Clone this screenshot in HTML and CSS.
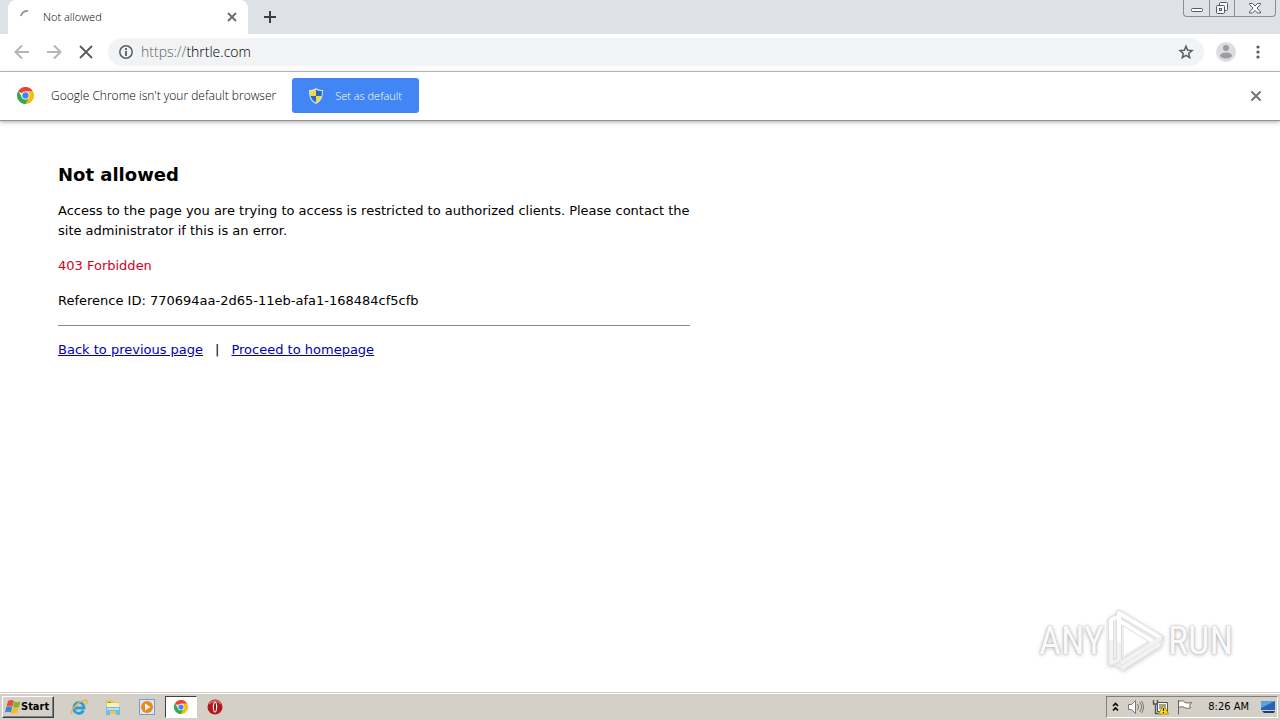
FILE: index.html
```html
<!DOCTYPE html>
<html lang="en">
<head>
<meta charset="utf-8">
<title>Not allowed</title>
<link rel="stylesheet" href="styles.css">
</head>
<body>
<svg class="defs" aria-hidden="true">
  <symbol id="chrome" viewBox="0 0 48 48">
    <path fill="#ea4335" d="M24 24 3.2 12A24 24 0 0 1 44.8 12L45 13H24z"/>
    <path fill="#fbbc05" d="M44.8 12A24 24 0 0 1 24 48L20 47 33.5 29.5 24 13H44.8z"/>
    <path fill="#34a853" d="M3.2 12A24 24 0 0 0 24 48L33.5 29.5 24 35 14.5 29.5 4 11z"/>
    <circle cx="24" cy="24" r="11.5" fill="#fff"/><circle cx="24" cy="24" r="9" fill="#4285f4"/>
  </symbol>
</svg>
<header class="browser">
  <div class="tabstrip">
    <div class="tab">
      <svg class="spinner" width="16" height="16" viewBox="0 0 16 16"><path d="M2 7A6 6 0 0 1 9 2" fill="none" stroke="#969696" stroke-width="2"/></svg>
      <span class="tab-title">Not allowed</span>
      <button class="icon-btn" aria-label="Close tab"><svg width="16" height="16" viewBox="0 0 16 16"><path d="m4 4 8 8M12 4l-8 8" stroke="#66696d" stroke-width="1.800"/></svg></button>
    </div>
    <button class="icon-btn new-tab" aria-label="New tab"><svg width="16" height="16" viewBox="0 0 16 16"><path d="M8 2v12M2 8h12" stroke="#3a3d42" stroke-width="2"/></svg></button>
    <div class="window-controls">
      <button aria-label="Minimize"><svg width="14" height="14" viewBox="0 0 14 14"><rect x="1.500" y="8.500" width="11" height="3" rx="1" fill="#fff" stroke="#565a62"/></svg></button>
      <button aria-label="Restore"><svg width="14" height="14" viewBox="0 0 14 14" fill="#f4f5f7" stroke="#565a62"><rect x="4.500" y="2.500" width="8" height="8" rx="1"/><rect x="1.500" y="5.500" width="8" height="8" rx="1"/><rect x="4.500" y="8.500" width="2" height="2"/></svg></button>
      <button class="wide" aria-label="Close"><svg width="14" height="14" viewBox="0 0 14 14"><path d="M1.500 3.500h3L7 6l2.500-2.500h3v1L9 8l3.500 4v1h-3L7 10.500 4.500 13h-3v-1L5 8 1.500 4.500z" fill="#fff" stroke="#565a62"/></svg></button>
    </div>
  </div>
  <div class="toolbar">
    <button class="icon-btn" aria-label="Back"><svg width="16" height="16" viewBox="0 0 16 16"><path d="M15 8H2M8 1.500 1.500 8 8 14.500" fill="none" stroke="#b4b5b7" stroke-width="2"/></svg></button>
    <button class="icon-btn" aria-label="Forward"><svg width="16" height="16" viewBox="0 0 16 16"><path d="M1 8h13M8 1.500 14.500 8 8 14.500" fill="none" stroke="#b4b5b7" stroke-width="2"/></svg></button>
    <button class="icon-btn" aria-label="Stop"><svg width="16" height="16" viewBox="0 0 16 16"><path d="m2 2 12 12M14 2 2 14" stroke="#56595e" stroke-width="1.800"/></svg></button>
    <div class="address">
      <svg width="16" height="16" viewBox="0 0 16 16"><circle cx="8" cy="8" r="6.200" fill="none" stroke="#5a5d61" stroke-width="1.500"/><path d="M8 4v2M8 7v5" stroke="#5a5d61" stroke-width="1.800"/></svg>
      <span class="url"><span class="scheme">https://</span>thrtle.com</span>
      <button class="icon-btn" aria-label="Bookmark"><svg width="16" height="16" viewBox="0 0 16 16"><path d="m8 2.200 1.700 4 4.300.4-3.300 2.800 1 4.200L8 11.400l-3.700 2.200 1-4.200L2 6.600l4.300-.4z" fill="none" stroke="#5a5d61" stroke-width="1.500"/></svg></button>
    </div>
    <button class="icon-btn avatar" aria-label="Profile"><svg width="20" height="20" viewBox="0 0 20 20"><circle cx="10" cy="10" r="10" fill="#dcdde0"/><circle cx="10" cy="6" r="3" fill="#9b9da1"/><ellipse cx="10" cy="13.500" rx="6" ry="3" fill="#9b9da1"/></svg></button>
    <button class="icon-btn" aria-label="Menu"><svg width="16" height="16" viewBox="0 0 16 16" fill="#56595e"><circle cx="8" cy="3" r="1.600"/><circle cx="8" cy="8" r="1.600"/><circle cx="8" cy="13" r="1.600"/></svg></button>
  </div>
  <div class="infobar">
    <svg width="17" height="17"><use href="#chrome"/></svg>
    <span class="info-text">Google Chrome isn't your default browser</span>
    <button class="set-default">
      <svg width="14" height="16" viewBox="0 0 14 16"><path d="M7 0c2 1.500 4 2 7 2 0 6-1 11-7 14C1 13 0 8 0 2c3 0 5-.5 7-2z" fill="#d5e4ee"/><path d="M7 1.500V8h5.500L13 3c-2.500 0-4.500-.5-6-1.500zM7 8H1.500c.8 3 2.500 5 5.500 6.500z" fill="#2768c4"/><path d="M7 1.500V8H1.500L1 3c2.500 0 4.500-.5 6-1.500zM7 8h5.500c-.8 3-2.500 5-5.500 6.500z" fill="#f4d73c"/></svg>
      Set as default
    </button>
    <button class="icon-btn dismiss" aria-label="Dismiss"><svg width="16" height="16" viewBox="0 0 16 16"><path d="m3.500 3.500 9 9M12.500 3.500l-9 9" stroke="#707276" stroke-width="2"/></svg></button>
  </div>
</header>
<main class="page">
  <div class="message">
    <h1>Not allowed</h1>
    <p>Access to the page you are trying to access is restricted to authorized clients. Please contact the site administrator if this is an error.</p>
    <p class="error">403 Forbidden</p>
    <p>Reference ID: 770694aa-2d65-11eb-afa1-168484cf5cfb</p>
    <hr>
    <nav><a href="#">Back to previous page</a><span>|</span><a href="#">Proceed to homepage</a></nav>
  </div>
  <div class="watermark">
    <span>ANY</span>
    <svg width="60" height="66" viewBox="0 0 60 66" fill="none" stroke-linejoin="round">
      <path d="M6 9v47l8 4 3 3 40-28v-6L15 2z" fill="#eee"/>
      <path d="M18 18v29l25-15z" fill="#fff"/>
      <g stroke="#dedede" stroke-width="6"><path d="M13 52V5l42 25-40 25M11 9l-6 3v43l8-3M14 13l34 21M54 36 16 60"/></g>
      <g stroke="#fff" stroke-width="4"><path d="M13 34V5l42 25M11 9l-6 3v20M14 13l34 21"/></g>
      <g stroke="#f2f2f2" stroke-width="4"><path d="M13 34v18M5 32v23l8-3M55 30 15 55M54 36 16 60"/></g>
    </svg>
    <span>RUN</span>
  </div>
</main>
<footer class="taskbar">
  <button class="start"><svg width="17" height="16" viewBox="0 0 17 16"><path d="M4 2c2-1.500 4-1.500 6 0L8.500 7.500c-2-1-4-1-6 0z" fill="#e8542a"/><path d="M10.500 2.500c2 1 4 1 6 0L15 8c-2 1-4 1-6 0z" fill="#79b530"/><path d="M2.200 8c2-1 4-1 6 0L7 13.500c-2-1-4-1-6 0z" fill="#3c85d4"/><path d="M8.700 8.500c2 1 4 1 6 0L13 14c-2 1-4 1-6 0z" fill="#f5bd22"/></svg>Start</button>
  <div class="tasks">
    <button aria-label="Internet Explorer"><svg width="18" height="18" viewBox="0 0 18 18" fill="none"><path d="M4 10h10c0-7-9-7-10-1-1 7 7 8 9.500 3.500" stroke="#2d9be0" stroke-width="2.800"/><path d="M2 16C-1 13 9 3 15 2c3 0 2 3 1 4" stroke="#e8b933" stroke-width="1.500"/></svg></button>
    <button aria-label="Explorer"><svg width="18" height="18" viewBox="0 0 18 18"><path d="M2 2h6l1 2h6v12H2z" fill="#e8c65a"/><path d="M3 5h12v4H3z" fill="#faf0b6"/><path d="M4 4h3v1H4z" fill="#48a65c"/><path d="M2 9h14v8h-4v-4H6v4H2z" fill="#73bce4"/><path d="M3 10h12v2H3z" fill="#b6e0f4"/></svg></button>
    <button aria-label="Media Player"><svg width="18" height="18" viewBox="0 0 18 18"><path d="M1.500 1.500h15v15h-15z" fill="#d8eaf9" stroke="#6f9fc9"/><circle cx="9" cy="9" r="6" fill="#f08718"/><path d="m7 5.500 5.500 3.500L7 12.500z" fill="#fff"/></svg></button>
    <button class="active" aria-label="Chrome"><svg width="14" height="14"><use href="#chrome"/></svg></button>
    <button aria-label="Opera"><svg width="16" height="16" viewBox="0 0 16 16"><circle cx="8" cy="8" r="7.500" fill="#b3161d"/><path d="M2 5a7 6 0 0 1 12 0" fill="none" stroke="#dc6666" stroke-width="1.500"/><ellipse cx="8" cy="8" rx="2.200" ry="5.500" fill="#fff"/><ellipse cx="8" cy="8" rx="1" ry="4.500" fill="#9a1016"/></svg></button>
  </div>
  <div class="tray">
    <svg width="9" height="12" viewBox="0 0 9 12"><path d="m2 5 2.500-2.500L7 5M2 9.500 4.500 7 7 9.500" fill="none" stroke="#000" stroke-width="1.600"/></svg>
    <svg width="18" height="16" viewBox="0 0 18 16" fill="none" stroke="#777"><path d="M1.500 5.500h3l4-4v13l-4-4h-3z" fill="#fff"/><path d="M10.500 5q2 3 0 6M12.500 3q4 5 0 10M14.500 2q4 6 0 12"/></svg>
    <svg width="17" height="16" viewBox="0 0 17 16"><path d="M5.500 3.500h10v9h-10z" fill="#fff" stroke="#555"/><path d="M7 5h7v5H7z" fill="#9aa5ad"/><path d="M1.500 1v4h4V1M3.500 5v9.500h6" fill="none" stroke="#555" stroke-width="1.400"/><path d="m11.500 6 5 9h-10z" fill="#ffdc24" stroke="#b48e10"/><path d="M11.500 9v3m0 1v1" stroke="#222" stroke-width="1.200"/></svg>
    <svg width="17" height="16" viewBox="0 0 17 16"><path d="M2.500 1v14.500M2.500 2.500c3-1 5-1 6 .5 2 1.500 4 1 7 .5l-2 3 1 2.500c-3 .5-4 .5-6-.5-2-1-4-1-6 0" fill="#fff" stroke="#666"/></svg>
    <time>8:26 AM</time>
    <svg width="16" height="15" viewBox="0 0 16 15"><path d="M1 2h14v9H1z" fill="#2862b2"/><path d="M1 2h14L1 9z" fill="#5c9fe2"/><path d="M2 12h13l-1 2H4z" fill="#1b3f75"/></svg>
  </div>
</footer>
</body>
</html>
```

FILE: styles.css
```css
* { box-sizing: border-box; }
body {
  margin: 0;
  min-height: 100vh;
  display: flex;
  flex-direction: column;
  background: #fff;
  color: #000;
  font: 13px/20px "DejaVu Sans", Verdana, sans-serif;
}
svg { display: block; flex: none; }
.defs { position: absolute; width: 0; height: 0; }
button { border: 0; padding: 0; background: none; font: inherit; color: inherit; }
.browser { font-family: "Open Sans", sans-serif; font-weight: 300; }
.icon-btn { display: flex; flex: none; }

.tabstrip { display: flex; align-items: center; height: 34px; padding-left: 8px; background: #dee1e6; }
.tab {
  display: flex;
  align-items: center;
  align-self: stretch;
  gap: 8px;
  width: 240px;
  padding: 0 8px 0 11px;
  border-radius: 8px 8px 0 0;
  background: #fff;
}
.tab-title { flex: 1; font-size: 11px; color: #000; }
.new-tab { margin-left: 14px; }
.window-controls {
  display: flex;
  align-self: flex-start;
  margin: 0 4px 0 auto;
  border: 1px solid #8a8e96;
  border-top: 0;
  border-radius: 0 0 4px 4px;
}
.window-controls button { display: flex; justify-content: center; width: 25px; height: 16px; }
.window-controls button + button { border-left: 1px solid #8a8e96; }
.window-controls .wide { width: 41px; }

.toolbar {
  display: flex;
  align-items: center;
  gap: 16px;
  height: 38px;
  padding: 0 14px 2px;
  border-bottom: 1px solid #b4b5b7;
}
.address {
  display: flex;
  align-items: center;
  flex: 1;
  gap: 7px;
  height: 28px;
  margin-right: -4px;
  margin-left: -2px;
  padding: 0 10px;
  border-radius: 14px;
  background: #f1f3f4;
}
.avatar { margin-right: -2px; }
.url { flex: 1; font-size: 14px; color: #000; }
.scheme { color: #5f6368; }

.infobar {
  display: flex;
  align-items: center;
  height: 49px;
  padding: 0 16px 1px 17px;
  border-bottom: 1px solid #929292;
  box-shadow: 0 1px 4px #aaa;
}
.info-text { margin: 0 16px 0 17px; font-size: 12px; color: #000; }
.set-default {
  display: flex;
  align-items: center;
  gap: 12px;
  height: 35px;
  padding: 0 17px;
  border-radius: 3px;
  background: #4285f4;
  color: #fff;
  font-size: 11px;
}
.dismiss { margin-left: auto; }

.page { position: relative; flex: 1; padding: 44px 58px; }
.message { max-width: 632px; }
h1 { margin: 0 0 16px; font-size: 18px; line-height: 20px; }
p { margin: 0 0 15px; }
.error { color: #d0021b; }
hr { margin: -1px 0 14px; border: 0; border-top: 1px solid #888; }
nav { display: flex; gap: 12px; }
a { color: #0000b4; }
.watermark {
  position: absolute;
  right: 47px;
  bottom: 18px;
  display: flex;
  align-items: center;
  gap: 2px;
  color: #fafafa;
  font: 38px/40px "Liberation Sans Narrow", "Roboto Condensed", "Liberation Sans", sans-serif;
  text-shadow: 0 0 2px #aaa, 0 1px 4px #bbb;
}
.watermark svg { filter: drop-shadow(0 1px 2px #ccc); }

.taskbar {
  display: flex;
  align-items: center;
  height: 28px;
  padding: 0 2px;
  border-top: 1px solid #d4d0c8;
  box-shadow: inset 0 1px #fff;
  background: #d4d0c8;
  font: 11px/16px "DejaVu Sans Condensed", Tahoma, sans-serif;
}
.start {
  display: flex;
  align-items: center;
  height: 22px;
  padding: 0 4px 0 1px;
  border: 1px solid;
  border-color: #fff #404040 #404040 #fff;
  box-shadow: inset -1px -1px #808080;
  font-weight: bold;
}
.tasks { display: flex; align-items: center; margin-left: 9px; gap: 2px; }
.tasks button { display: flex; align-items: center; justify-content: center; width: 32px; height: 22px; }
.tasks .active { border: 1px solid; border-color: #404040 #fff #fff #404040; background: #fff; }
.tray {
  display: flex;
  align-items: center;
  gap: 7px;
  height: 22px;
  margin-left: auto;
  padding: 0 1px 0 4px;
  border: 1px solid;
  border-color: #808080 #fff #fff #808080;
}
time { margin: 0 4px 0 8px; }
```
